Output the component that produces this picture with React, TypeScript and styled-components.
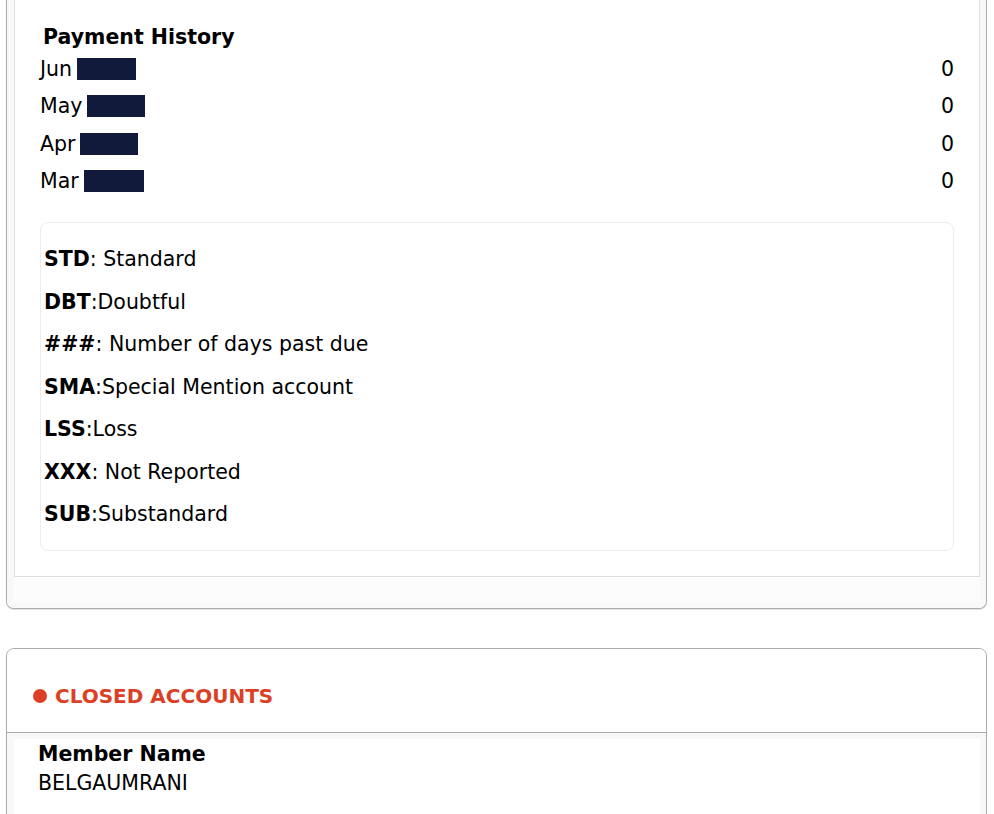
import styled, { createGlobalStyle } from 'styled-components';

const GlobalStyle = createGlobalStyle`
  html, body {
    margin: 0;
    padding: 0;
    background: #ffffff;
  }
  body {
    font-family: 'DejaVu Sans', Verdana, sans-serif;
    color: #000000;
    font-size: 20.5px;
  }
  * {
    box-sizing: border-box;
  }
`;

const payments = [
  { month: 'Jun', mask: 59, value: 0 },
  { month: 'May', mask: 58, value: 0 },
  { month: 'Apr', mask: 58, value: 0 },
  { month: 'Mar', mask: 60, value: 0 },
];

const legend = [
  { code: 'STD', text: ': Standard' },
  { code: 'DBT', text: ':Doubtful' },
  { code: '###', text: ': Number of days past due' },
  { code: 'SMA', text: ':Special Mention account' },
  { code: 'LSS', text: ':Loss' },
  { code: 'XXX', text: ': Not Reported' },
  { code: 'SUB', text: ':Substandard' },
];

export default function App() {
  return (
    <>
      <GlobalStyle />
      <Page>
        <Card cut>
          <CardBody cut>
            <Panel cut>
              <SectionTitle>Payment History</SectionTitle>
              {payments.map((p) => (
                <PayRow key={p.month}>
                  <Month>
                    {p.month}
                    <Mask style={{ width: p.mask }} />
                  </Month>
                  <span>{p.value}</span>
                </PayRow>
              ))}
              <Legend>
                {legend.map((l) => (
                  <LegendRow key={l.code}>
                    <b>{l.code}</b>
                    {l.text}
                  </LegendRow>
                ))}
              </Legend>
            </Panel>
          </CardBody>
        </Card>

        <Card>
          <CardHeader>
            <Dot />
            <HeaderTitle>CLOSED ACCOUNTS</HeaderTitle>
          </CardHeader>
          <CardBody>
            <Panel>
              <FieldLabel>Member Name</FieldLabel>
              <FieldValue>BELGAUMRANI</FieldValue>
            </Panel>
          </CardBody>
        </Card>
      </Page>
    </>
  );
}

const Page = styled.div`
  width: 994px;
  padding: 0 7px 0 6px;
  display: flex;
  flex-direction: column;
  gap: 39px;
`;

const Card = styled.div<{ cut?: boolean }>`
  width: 100%;
  border: 1px solid #acacac;
  border-top: ${(p) => (p.cut ? 'none' : '1px solid #acacac')};
  border-radius: ${(p) => (p.cut ? '0 0 8px 8px' : '8px')};
  background: #ffffff;
  box-shadow: 0 1px 1px rgba(0, 0, 0, 0.12);
  overflow: hidden;
`;

const CardBody = styled.div<{ cut?: boolean }>`
  background: #f8f8f8;
  padding: ${(p) => (p.cut ? '0 6px 6px 7px' : '6px 6px 0 7px')};
`;

const Panel = styled.div<{ cut?: boolean }>`
  background: #ffffff;
  border: ${(p) => (p.cut ? '1px solid #dedede' : 'none')};
  border-top: none;
  padding: ${(p) => (p.cut ? '24px 25px 25px 25px' : '3px 25px 40px 24px')};
  margin-bottom: ${(p) => (p.cut ? '25px' : '0')};
  box-shadow: ${(p) => (p.cut ? '0 25px 0 0 #fcfcfc' : 'none')};
`;

const SectionTitle = styled.div`
  font-weight: bold;
  line-height: 26px;
  padding-left: 3px;
`;

const PayRow = styled.div`
  height: 37.5px;
  display: flex;
  align-items: center;
  justify-content: space-between;
  line-height: 22px;
`;

const Month = styled.span`
  display: flex;
  align-items: center;
  gap: 5px;
`;

const Mask = styled.span`
  display: inline-block;
  height: 22px;
  background: #111a3a;
`;

const Legend = styled.div`
  margin-top: 22px;
  border: 1px solid #ececec;
  border-radius: 8px;
  padding: 15px 3px 14px 3px;
`;

const LegendRow = styled.div`
  height: 42.5px;
  display: flex;
  align-items: center;
  white-space: pre;
`;

const CardHeader = styled.div`
  height: 84px;
  display: flex;
  align-items: center;
  gap: 8px;
  padding: 12px 26px 0;
  border-bottom: 1px solid #acacac;
  background: #ffffff;
`;

const Dot = styled.span`
  width: 14px;
  height: 14px;
  border-radius: 50%;
  background: #dc3f24;
`;

const HeaderTitle = styled.span`
  color: #dc3f24;
  font-weight: bold;
  font-size: 20px;
`;

const FieldLabel = styled.div`
  font-weight: bold;
  line-height: 24px;
`;

const FieldValue = styled.div`
  line-height: 34px;
`;
